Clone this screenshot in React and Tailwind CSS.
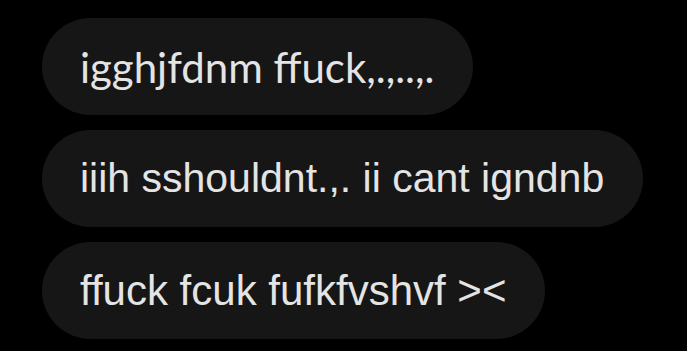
import React from 'react';

const messages = [
  { text: 'igghjfdnm ffuck,.,..,.', font: "font-['Lato',sans-serif] text-[42px]" },
  { text: 'iiih sshouldnt.,. ii cant igndnb', font: "font-['Liberation_Sans',sans-serif] text-[41px]" },
  { text: 'ffuck fcuk fufkfvshvf ><', font: "font-['Liberation_Sans',sans-serif] text-[42px]" },
];

const Bubble = ({ text, font }) => (
  <div className="self-start h-[97px] pl-[38px] pr-[39px] flex items-center rounded-full bg-[#161616]">
    <span className={`${font} leading-none text-[#e4e4e4] whitespace-pre`}>{text}</span>
  </div>
);

export default function App() {
  return (
    <div className="w-[687px] h-[351px] bg-black overflow-hidden">
      <div className="flex flex-col gap-[15px] pl-[42px] pt-[18px]">
        {messages.map((m, i) => (
          <Bubble key={i} text={m.text} font={m.font} />
        ))}
      </div>
    </div>
  );
}
